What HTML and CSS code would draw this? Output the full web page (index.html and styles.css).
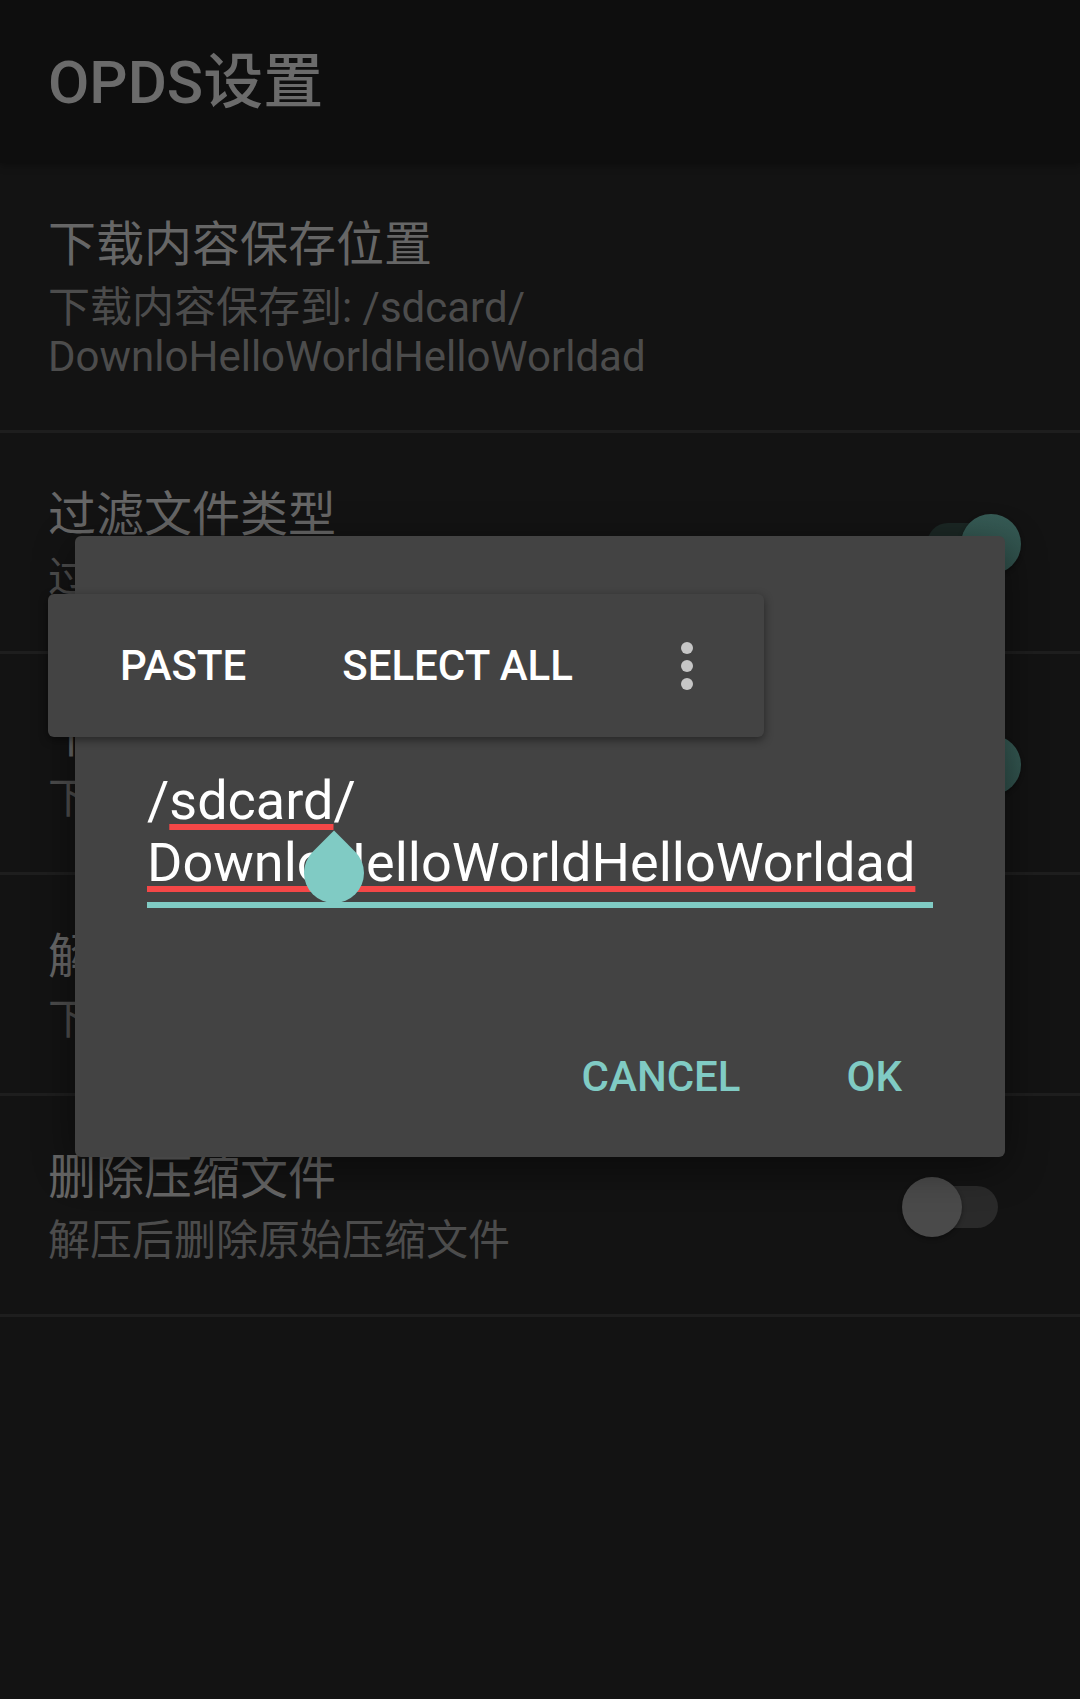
FILE: index.html
```html
<!DOCTYPE html>
<html lang="zh-CN">
<head>
<meta charset="utf-8">
<title>OPDS设置</title>
<link rel="stylesheet" href="styles.css">
</head>
<body>
<div class="screen">
  <header class="appbar">
    <h1 class="appbar-title">OPDS设置</h1>
  </header>
  <main class="prefs">
    <div class="pref">
      <div class="pref-text">
        <div class="pref-title">下载内容保存位置</div>
        <div class="pref-summary">下载内容保存到: /sdcard/<br>DownloHelloWorldHelloWorldad</div>
      </div>
    </div>
    <div class="pref">
      <div class="pref-text">
        <div class="pref-title">过滤文件类型</div>
        <div class="pref-summary">过滤不支持的文件类型</div>
      </div>
      <div class="switch on"><span class="track"></span><span class="thumb"></span></div>
    </div>
    <div class="pref">
      <div class="pref-text">
        <div class="pref-title">下载后自动解压</div>
        <div class="pref-summary">下载完成后自动解压压缩文件</div>
      </div>
      <div class="switch on"><span class="track"></span><span class="thumb"></span></div>
    </div>
    <div class="pref">
      <div class="pref-text">
        <div class="pref-title">解压位置</div>
        <div class="pref-summary">下载内容解压到当前目录</div>
      </div>
    </div>
    <div class="pref">
      <div class="pref-text">
        <div class="pref-title">删除压缩文件</div>
        <div class="pref-summary">解压后删除原始压缩文件</div>
      </div>
      <div class="switch"><span class="track"></span><span class="thumb"></span></div>
    </div>
  </main>

  <div class="dialog">
    <div class="edit">/<span class="misspelled">sdcard</span>/<br><span class="misspelled">DownloHelloWorldHelloWorldad</span></div>
    <div class="dialog-actions">
      <span class="btn btn-cancel">CANCEL</span>
      <span class="btn btn-ok">OK</span>
    </div>
  </div>

  <div class="handle"></div>

  <div class="text-toolbar">
    <span class="tb-item tb-paste">PASTE</span>
    <span class="tb-item tb-select">SELECT ALL</span>
    <span class="tb-more"><i></i><i></i><i></i></span>
  </div>
</div>
</body>
</html>
```

FILE: styles.css
```css
* { box-sizing: border-box; }

html, body {
  margin: 0;
  padding: 0;
  background: #131313;
}

body {
  font-family: Roboto, "Noto Sans CJK SC", "Noto Sans", sans-serif;
}

.screen {
  position: relative;
  width: 1080px;
  height: 1699px;
  overflow: hidden;
  background: #131313;
}

.appbar {
  height: 163px;
  display: flex;
  align-items: center;
  padding-left: 48px;
  padding-bottom: 10px;
  background: #0e0e0e;
  box-shadow: 0 2px 8px rgba(0, 0, 0, 0.35);
  position: relative;
  z-index: 1;
}

.appbar-title {
  margin: 0;
  font-size: 60px;
  font-weight: 500;
  color: #6b6b6b;
  line-height: normal;
}

.prefs {
  display: flex;
  flex-direction: column;
}

.pref {
  display: flex;
  align-items: center;
  padding: 52px 59px 49px 48px;
  border-bottom: 3px solid #1e1e1e;
}

.pref-text {
  flex: 1;
  min-width: 0;
}

.pref-title {
  font-size: 48px;
  line-height: 60px;
  color: #666666;
}

.pref-summary {
  margin-top: 8px;
  font-size: 42px;
  line-height: 49px;
  color: #4c4c4c;
}

.switch {
  position: relative;
  width: 119px;
  height: 60px;
  flex: none;
}

.switch .track {
  position: absolute;
  left: 25px;
  top: 9px;
  width: 71px;
  height: 42px;
  border-radius: 21px;
  background: #2a2a2a;
}

.switch .thumb {
  position: absolute;
  left: 0;
  top: 0;
  width: 60px;
  height: 60px;
  border-radius: 50%;
  background: #4a4a4a;
  box-shadow: 0 2px 4px rgba(0, 0, 0, 0.35);
}

.switch.on .track {
  background: #1b2724;
}

.switch.on .thumb {
  left: auto;
  right: 0;
  background: linear-gradient(#365b55, #2f4f4a);
}

/* Dialog overlay */
.dialog {
  position: absolute;
  left: 75px;
  top: 536px;
  width: 930px;
  padding: 234px 72px 56px;
  background: #434343;
  border-radius: 6px;
  box-shadow: 0 10px 40px rgba(0, 0, 0, 0.45);
  z-index: 2;
}

.edit {
  font-size: 54px;
  line-height: 62px;
  color: #ffffff;
  padding-bottom: 8px;
  border-bottom: 6px solid #80cbc4;
}

.misspelled {
  text-decoration: underline;
  text-decoration-color: #f44747;
  text-decoration-thickness: 6px;
  text-underline-offset: 5px;
  text-decoration-skip-ink: none;
}

.dialog-actions {
  margin-top: 145px;
  display: flex;
  justify-content: flex-end;
  padding-right: 31px;
}

.btn {
  font-size: 42px;
  line-height: 48px;
  font-weight: 500;
  color: #80cbc4;
}

.btn-ok {
  margin-left: 106px;
}

/* Cursor handle */
.handle {
  position: absolute;
  left: 304px;
  top: 843px;
  width: 60px;
  height: 60px;
  background: #80cbc4;
  border-radius: 0 50% 50% 50%;
  transform: rotate(45deg);
  z-index: 3;
}

/* Floating text selection toolbar */
.text-toolbar {
  position: absolute;
  left: 48px;
  top: 594px;
  width: 716px;
  height: 143px;
  display: flex;
  align-items: center;
  background: #434343;
  border-radius: 6px;
  box-shadow: 0 3px 10px rgba(0, 0, 0, 0.45);
  z-index: 4;
}

.tb-item {
  font-size: 42px;
  font-weight: 500;
  color: #ffffff;
}

.tb-paste {
  margin-left: 72px;
}

.tb-select {
  margin-left: 96px;
}

.tb-more {
  margin-left: 108px;
  display: flex;
  flex-direction: column;
  gap: 6px;
}

.tb-more i {
  display: block;
  width: 12px;
  height: 12px;
  border-radius: 50%;
  background: #c6c6c6;
}
```
